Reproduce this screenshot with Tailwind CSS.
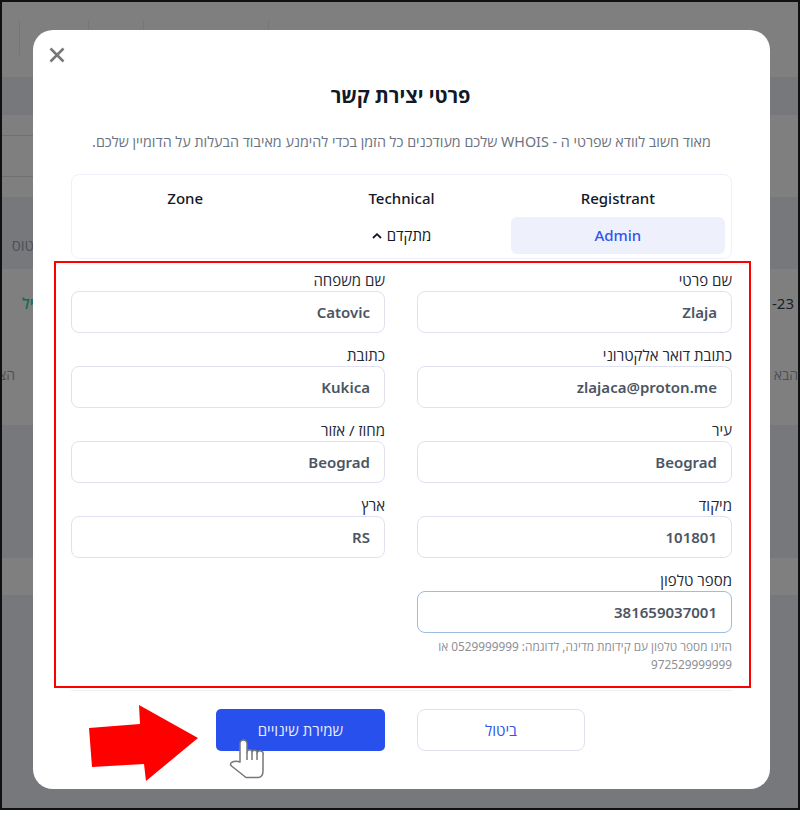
<!DOCTYPE html>
<html lang="he" dir="rtl">

<head>
  <meta charset="UTF-8">
  <title>פרטי יצירת קשר</title>
  <script src="https://cdn.jsdelivr.net/npm/@tailwindcss/browser@4"></script>
</head>

<body class="bg-white font-['Noto_Sans','Open_Sans',sans-serif]">

  <div class="relative h-[810px] w-[800px] overflow-hidden border-2 border-[#111]">

    <!-- page behind the modal, dimmed -->
    <div class="flex flex-col bg-[#7f7f7f] text-sm text-[#4d5057]" dir="ltr">
      <div class="flex h-[75px] pt-[18px]">
        <div class="ml-[17px] h-[35px] w-[69px] border-l border-[#767676]"></div>
        <div class="h-[10px] w-[55px] border-l border-[#767676]"></div>
        <div class="h-[10px] w-[125px] border-l border-[#767676]"></div>
        <div class="h-[10px] border-l border-[#767676]"></div>
      </div>
      <div class="h-[38px] bg-[#77787c]"></div>
      <div class="h-[21px] w-[31px] border-b border-[#6f6f6f]"></div>
      <div class="h-[41px] w-[31px] border-b border-[#6f6f6f]"></div>
      <div class="h-[20px]"></div>
      <div class="h-[72px] bg-[#77787c] pt-[38px] pl-[10px] text-[15px] leading-5"><span class="block w-[22px] overflow-hidden whitespace-nowrap" dir="rtl">טוס</span></div>
      <div class="flex h-[156px] flex-col">
        <div class="mt-[24px] flex h-5 items-center justify-between pr-[4px] pl-[20px] leading-5">
          <span class="text-[15px] font-semibold text-[#0d6b5e]" dir="rtl">יל</span>
          <span class="text-[15px] text-[#1c1f26]">-23</span>
        </div>
        <div class="mt-[52px] flex h-5 items-center justify-between leading-5">
          <span class="w-[13px] overflow-hidden whitespace-nowrap" dir="rtl">הצ</span>
          <span class="w-[26px] overflow-hidden whitespace-nowrap" dir="rtl">הבא</span>
        </div>
      </div>
      <div class="h-[133px] bg-[#77787c]"></div>
      <div class="h-[37px]"></div>
      <div class="h-[220px] bg-[#77787c]"></div>
    </div>

    <!-- modal -->
    <div class="absolute top-[28px] left-[31px] h-[759px] w-[737px] rounded-[20px] bg-white px-[38px] pt-[52px]">
      <button class="absolute top-[17px] left-[16px]" type="button">
        <svg class="h-4 w-4" fill="none" stroke="#777" stroke-width="2.6" viewBox="0 0 16 16">
          <path d="M1.500 1.500 14.500 14.500M14.500 1.500 1.500 14.500" />
        </svg>
      </button>

      <h2 class="pr-[2px] text-center text-xl leading-7 font-bold text-[#111827]">פרטי יצירת קשר</h2>
      <p class="mt-[22px] text-center text-[14.3px] leading-5 whitespace-nowrap text-[#6b7280]">מאוד חשוב לוודא שפרטי ה - WHOIS שלכם מעודכנים כל הזמן בכדי להימנע מאיבוד הבעלות על הדומיין שלכם.</p>

      <div class="mt-[22px] grid h-[85px] grid-cols-3 gap-x-[2px] rounded-lg border border-[#eef1fb] px-[6px] py-[5px] text-[15px] font-medium text-[#111827]">
        <div class="flex h-[37px] items-center justify-center">Registrant</div>
        <div class="flex h-[37px] items-center justify-center">Technical</div>
        <div class="flex h-[37px] items-center justify-center">Zone</div>
        <div class="flex h-[37px] items-center justify-center rounded-md bg-[#eef1fc] text-[#2f55ee]">Admin</div>
        <div class="flex h-[37px] items-center justify-center gap-[5px]">
          מתקדם
          <svg class="h-[6px] w-[10px]" fill="none" stroke="#111827" stroke-width="1.8" viewBox="0 0 10 6">
            <path d="M1 5 5 1.200 9 5" />
          </svg>
        </div>
      </div>

      <!-- red annotation round the form -->
      <div class="mt-[2px] -mr-[19px] -ml-[17px] h-[427px] border-2 border-[#f00] pt-[7px] pr-[17px] pl-[15px]">
        <div class="grid grid-cols-[315px_314px] gap-x-8 gap-y-3 text-[15px] text-[#1f2937]">
          <label class="block leading-5">שם פרטי
            <input class="mt-px block h-[42px] w-full rounded-lg border border-[#dfe2ee] px-[14px] font-semibold text-[#4b5563]" type="text" value="Zlaja" />
          </label>
          <label class="block leading-5">שם משפחה
            <input class="mt-px block h-[42px] w-full rounded-lg border border-[#dfe2ee] px-[14px] font-semibold text-[#4b5563]" type="text" value="Catovic" />
          </label>
          <label class="block leading-5">כתובת דואר אלקטרוני
            <input class="mt-px block h-[42px] w-full rounded-lg border border-[#dfe2ee] px-[14px] font-semibold text-[#4b5563]" type="text" value="zlajaca@proton.me" />
          </label>
          <label class="block leading-5">כתובת
            <input class="mt-px block h-[42px] w-full rounded-lg border border-[#dfe2ee] px-[14px] font-semibold text-[#4b5563]" type="text" value="Kukica" />
          </label>
          <label class="block leading-5">עיר
            <input class="mt-px block h-[42px] w-full rounded-lg border border-[#dfe2ee] px-[14px] font-semibold text-[#4b5563]" type="text" value="Beograd" />
          </label>
          <label class="block leading-5">מחוז / אזור
            <input class="mt-px block h-[42px] w-full rounded-lg border border-[#dfe2ee] px-[14px] font-semibold text-[#4b5563]" type="text" value="Beograd" />
          </label>
          <label class="block leading-5">מיקוד
            <input class="mt-px block h-[42px] w-full rounded-lg border border-[#dfe2ee] px-[14px] font-semibold text-[#4b5563]" type="text" value="101801" />
          </label>
          <label class="block leading-5">ארץ
            <input class="mt-px block h-[42px] w-full rounded-lg border border-[#dfe2ee] px-[14px] font-semibold text-[#4b5563]" type="text" value="RS" />
          </label>
          <div>
            <label class="block leading-5">מספר טלפון
              <input class="mt-px block h-[42px] w-full rounded-lg border border-[#9dbde0] px-[14px] font-semibold text-[#4b5563]" type="text" value="381659037001" />
            </label>
            <p class="mt-[4px] text-[11.8px] leading-[18px] text-[#8c8f96]">הזינו מספר טלפון עם קידומת מדינה, לדוגמה: 0529999999 או 972529999999</p>
          </div>
        </div>
      </div>

      <div class="mt-[2px] h-px bg-[#eceef2]"></div>

      <div class="mt-[18px] flex justify-center gap-8 pr-[2px] text-[15px]">
        <button class="h-[42px] w-[168px] rounded-lg border border-[#dfe2ee] font-medium text-[#2f55ee]" type="button">ביטול</button>
        <button class="h-[42px] w-[169px] rounded-[5px] bg-[#2850ec] font-medium text-[#e8ecfd]" type="button">שמירת שינויים</button>
      </div>

      <!-- annotation arrow -->
      <svg class="absolute top-[674px] left-[56px] h-[80px] w-[112px]" viewBox="90 704 112 80">
        <path d="M90 728 141 724 140 705 199 738 147 781 145 764 93 767Z" fill="#f00" />
      </svg>

      <!-- hand cursor -->
      <svg class="absolute top-[707px] left-[195px] h-[46px] w-[40px]" fill="#fff" stroke="#777" stroke-linejoin="round" stroke-width="1.500" viewBox="228 737 40 46">
        <path d="M240 743.500a3.500 3.500 0 0 1 7 0V752a2.500 2.500 0 0 1 5 0.500 2.500 2.500 0 0 1 5 0.500 3 3 0 0 1 6 2V771q0 6-4.500 6.500H246L231.500 766q-2-2 0-3.500 4-2 8.500-0.500Z" />
        <path d="M247 752V760M252 752.500V760M257 753V760" fill="none" />
      </svg>
    </div>
  </div>

</body>

</html>
